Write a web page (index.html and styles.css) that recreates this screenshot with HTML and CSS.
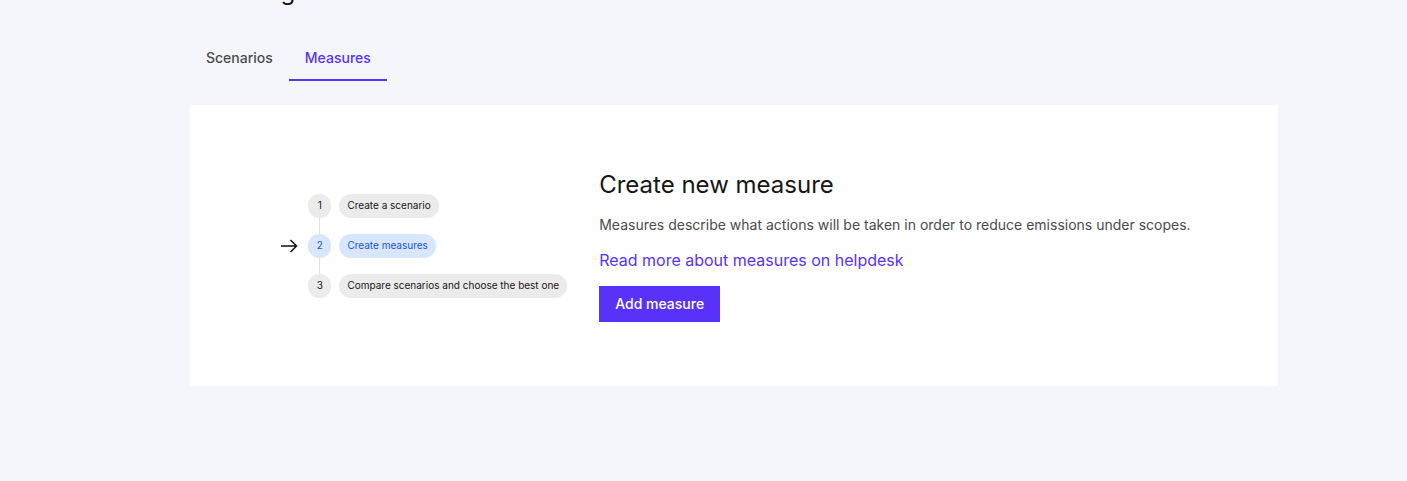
FILE: index.html
```html
<!DOCTYPE html>
<html lang="en">
<head>
    <meta charset="UTF-8">
    <meta name="viewport" content="width=device-width, initial-scale=1.0">
    <title>Modeling - Measures</title>
    <link rel="stylesheet" href="styles.css">
</head>
<body>
    <main class="page">
        <h1 class="page-title">Modeling</h1>

        <nav class="tabs">
            <a class="tab" href="#scenarios">Scenarios</a>
            <a class="tab active" href="#measures" aria-current="page">Measures</a>
        </nav>

        <section class="card">
            <ol class="steps">
                <li class="step">
                    <span class="step-arrow"></span>
                    <span class="step-number">1</span>
                    <span class="step-label">Create a scenario</span>
                </li>
                <li class="step current">
                    <span class="step-arrow">
                        <svg width="24" height="24" viewBox="0 0 24 24" fill="none" stroke="#111" stroke-width="1.5" aria-hidden="true">
                            <path d="M4 12H19.5M13.5 6L19.5 12L13.5 18"/>
                        </svg>
                    </span>
                    <span class="step-number">2</span>
                    <span class="step-label">Create measures</span>
                </li>
                <li class="step">
                    <span class="step-arrow"></span>
                    <span class="step-number">3</span>
                    <span class="step-label">Compare scenarios and choose the best one</span>
                </li>
            </ol>

            <div class="intro">
                <h2>Create new measure</h2>
                <p>Measures describe what actions will be taken in order to reduce emissions under scopes.</p>
                <a class="help-link" href="#helpdesk">Read more about measures on helpdesk</a>
                <button class="add-button" type="button">Add measure</button>
            </div>
        </section>
    </main>
</body>
</html>
```

FILE: styles.css
```css
* {
    margin: 0;
    padding: 0;
    box-sizing: border-box;
}

body {
    background-color: #f5f6fc;
    color: #161616;
    font-family: Inter, sans-serif;
    font-size: 14px;
}

.page {
    padding: 0 129px 0 190px;
}

.page-title {
    margin-top: -24px;
    font-size: 24px;
    font-weight: 400;
    line-height: 32px;
}

.tabs {
    display: flex;
    margin-top: 28px;
    margin-bottom: 24px;
}

.tab {
    padding: 12px 16px 11px;
    border-bottom: 2px solid transparent;
    color: #4b4b4b;
    font-weight: 500;
    line-height: 20px;
    text-decoration: none;
}

.tab.active {
    border-bottom-color: #5932fa;
    color: #5932fa;
}

.card {
    display: flex;
    justify-content: center;
    align-items: center;
    gap: 32px;
    padding: 64px;
    background-color: #fff;
}

.steps {
    display: flex;
    flex-direction: column;
    gap: 16px;
    list-style: none;
    font-size: 10px;
    line-height: 22px;
}

.step {
    display: flex;
    gap: 8px;
}

.step-arrow {
    width: 23px;
    height: 24px;
}

.step-number {
    position: relative;
    width: 23px;
    padding-bottom: 2px;
    border-radius: 12px;
    background-color: #ebebeb;
    text-align: center;
}

/* connector to the next step */
.step:not(:last-child) .step-number::after {
    content: "";
    position: absolute;
    top: 100%;
    left: 11px;
    width: 1px;
    height: 16px;
    background-color: #e0e0e0;
}

.step-label {
    padding: 0 8px 2px;
    border-radius: 12px;
    background-color: #ebebeb;
}

.current .step-number,
.current .step-label {
    background-color: #d9e6ff;
    color: #1257d6;
}

.intro {
    display: flex;
    flex-direction: column;
    align-items: flex-start;
    gap: 14px;
}

.intro h2 {
    font-size: 24px;
    font-weight: 400;
    line-height: 32px;
}

.intro p {
    color: #4b4b4b;
    line-height: 20px;
}

.help-link {
    border-bottom: 1px solid transparent;
    color: #5932fa;
    font-size: 16px;
    line-height: 22px;
    text-decoration: none;
}

.help-link:hover {
    border-bottom-color: #5932fa;
}

.add-button {
    padding: 8px 16px;
    border: none;
    background-color: #5932fa;
    color: #fff;
    font-family: inherit;
    font-size: 14px;
    font-weight: 500;
    line-height: 20px;
    cursor: pointer;
}
```
